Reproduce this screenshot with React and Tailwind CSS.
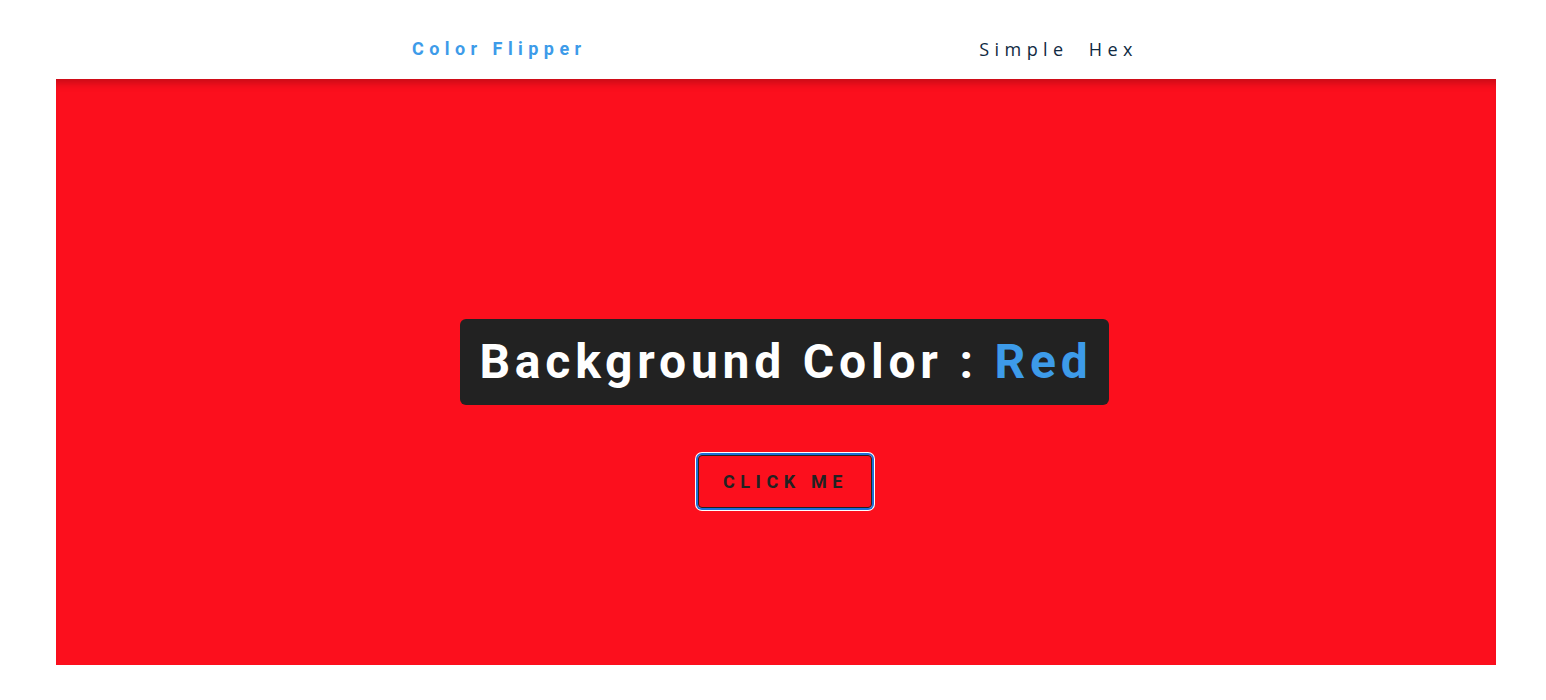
import React from 'react';

const App = () => {
  return (
    <div className="min-h-[700px] bg-white">
      <nav className="h-[79px] flex items-center pt-[18px]">
        <div className="w-[730px] mx-auto flex justify-between items-center pl-[4px]">
          <h4 className="font-['Roboto',sans-serif] font-bold text-[18px] tracking-[0.34rem] text-[#3d9be9]">
            Color Flipper
          </h4>
          <a className="font-['Open_Sans',sans-serif] text-[18px] tracking-[0.34rem] text-[#102a42] mt-[2px]">
            Simple&nbsp; Hex
          </a>
        </div>
      </nav>
      <main className="ml-[56px] w-[1440px] h-[586px] bg-[#fc0f1d] shadow-[inset_0_10px_8px_-6px_rgba(0,0,0,0.22)] flex flex-col items-center pt-[240px] pl-[17px]">
        <h2 className="bg-[#222222] rounded-md pl-[19px] pr-[16px] h-[86px] flex items-center font-['Roboto',sans-serif] font-bold text-[48px] tracking-[0.3rem] text-white whitespace-pre">
          Background Color : <span className="text-[#3d9be9]">Red</span>
        </h2>
        <button className="mt-[50px] w-[174px] h-[53px] rounded-[4px] border border-[#222] shadow-[0_0_0_2px_#1e6fd9,0_0_0_3px_white] bg-transparent font-['Roboto',sans-serif] font-bold text-[18px] tracking-[0.35rem] text-[#222] uppercase pl-[2px]">
          click me
        </button>
      </main>
    </div>
  );
};

export default App;
